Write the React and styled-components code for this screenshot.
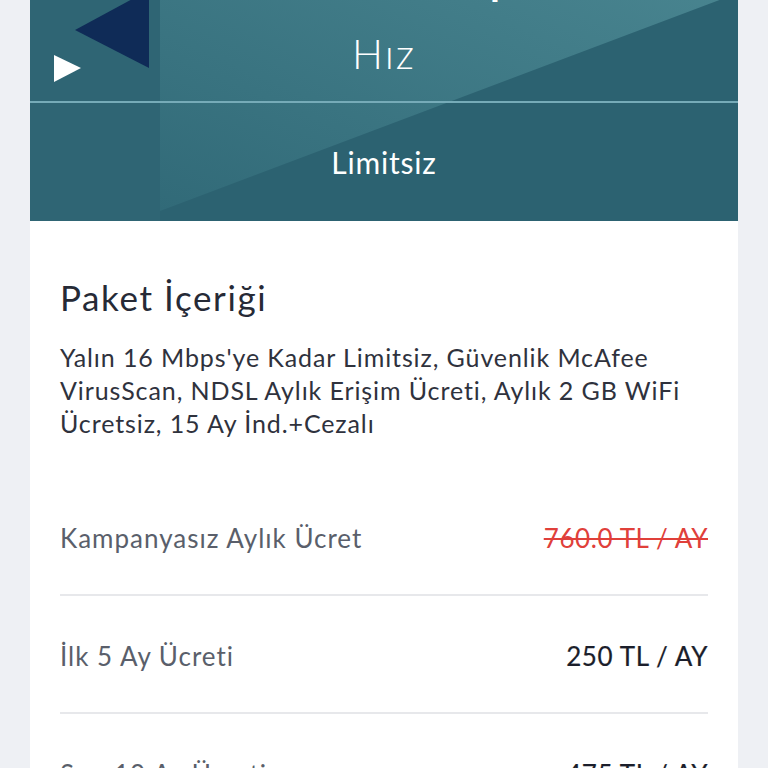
import React from 'react';
import styled, { createGlobalStyle } from 'styled-components';

const GlobalStyle = createGlobalStyle`
  body {
    margin: 0;
    background: #eef0f4;
    font-family: 'Lato', 'Open Sans', sans-serif;
  }
`;

const Page = styled.div`
  padding: 0 30px;
  margin-top: -40px; /* page is scrolled a little */
`;

const Card = styled.div`
  background: #fff;
`;

const Header = styled.div`
  position: relative;
  overflow: hidden;
  background: #2c6271;
  color: #fff;
`;

const Backdrop = styled.svg`
  position: absolute;
  inset: 0;
  width: 100%;
  height: 100%;
`;

const HeaderTop = styled.div`
  position: relative;
  height: 141px;
  display: flex;
  flex-direction: column;
  align-items: center;
`;

const SpeedValue = styled.div`
  font-size: 40px;
  line-height: 40px;
  font-weight: 700;
  margin-left: 136px;
`;

const SpeedLabel = styled.div`
  margin-top: 32px;
  font-size: 41px;
  font-weight: 300;
  line-height: 44px;
  letter-spacing: 2px;
`;

const Rule = styled.div`
  position: relative;
  height: 2px;
  background: #76abb8;
`;

const HeaderBottom = styled.div`
  position: relative;
  height: 118px;
  display: flex;
  align-items: center;
  justify-content: center;
  font-size: 30px;
  letter-spacing: 0.8px;
`;

const Body = styled.div`
  padding: 56px 30px 0;
`;

const Title = styled.h2`
  margin: 0;
  font-size: 35px;
  line-height: 40px;
  font-weight: 400;
  letter-spacing: 1.6px;
  color: #262a36;
`;

const Description = styled.p`
  margin: 24px 0 38px;
  font-size: 25px;
  line-height: 33px;
  letter-spacing: 0.9px;
  color: #2f323d;
`;

const PriceRow = styled.div`
  display: flex;
  justify-content: space-between;
  align-items: center;
  padding: 45px 0 41px;
  line-height: 30px;
  font-size: 26px;
  border-bottom: 2px solid #e7e8eb;
`;

const Label = styled.span`
  color: #5a5f6b;
  letter-spacing: 1px;
`;

const Value = styled.span`
  color: ${(p) => (p.$old ? '#e0403a' : '#1b1e2b')};
  text-decoration: ${(p) => (p.$old ? 'line-through' : 'none')};
  -webkit-text-stroke: ${(p) => (p.$old ? '0' : '0.2px #1b1e2b')};
  letter-spacing: 0.6px;
`;

const rows = [
  { label: 'Kampanyasız Aylık Ücret', value: '760.0 TL / AY', old: true },
  { label: 'İlk 5 Ay Ücreti', value: '250 TL / AY' },
  { label: 'Son 10 Ay Ücreti', value: '475 TL / AY' },
];

export default function App() {
  return (
    <>
      <GlobalStyle />
      <Page>
        <Card>
          <Header>
            <Backdrop viewBox="0 0 708 261" preserveAspectRatio="none">
              <defs>
                <linearGradient id="band" x1="0" y1="1" x2="1" y2="0">
                  <stop offset="0" stopColor="#316a78" />
                  <stop offset="1" stopColor="#4a8691" />
                </linearGradient>
              </defs>
              <rect x="0" y="0" width="130" height="261" fill="#2f6574" />
              <polygon points="130,0 708,0 708,33 130,251" fill="url(#band)" />
              <polygon points="45,70 119,30 119,108" fill="#0f2b57" />
              <polygon points="24,95 24,122 51,108" fill="#fff" />
            </Backdrop>
            <HeaderTop>
              <SpeedValue>16 Mbps</SpeedValue>
              <SpeedLabel>Hız</SpeedLabel>
            </HeaderTop>
            <Rule />
            <HeaderBottom>Limitsiz</HeaderBottom>
          </Header>
          <Body>
            <Title>Paket İçeriği</Title>
            <Description>
              Yalın 16 Mbps'ye Kadar Limitsiz, Güvenlik McAfee VirusScan, NDSL
              Aylık Erişim Ücreti, Aylık 2 GB WiFi Ücretsiz, 15 Ay İnd.+Cezalı
            </Description>
            {rows.map((r) => (
              <PriceRow key={r.label}>
                <Label>{r.label}</Label>
                <Value $old={r.old}>{r.value}</Value>
              </PriceRow>
            ))}
          </Body>
        </Card>
      </Page>
    </>
  );
}
